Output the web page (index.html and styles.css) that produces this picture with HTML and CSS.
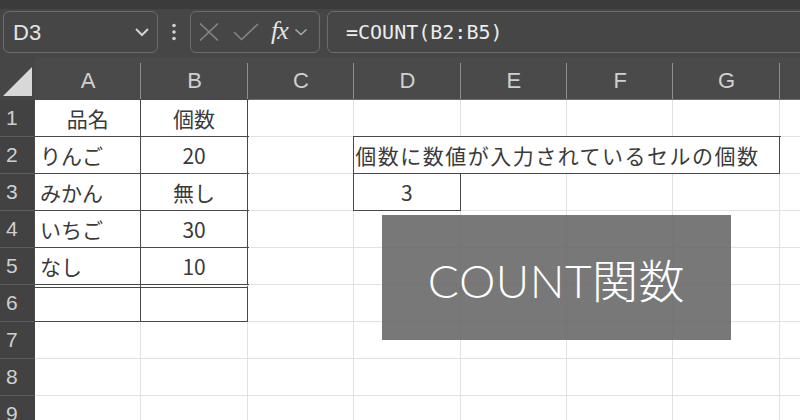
FILE: index.html
```html
<!DOCTYPE html>
<html lang="ja">
<head>
<meta charset="utf-8">
<link rel="stylesheet" href="styles.css">
</head>
<body>
<div class="app">
  <div class="topbar">
    <div class="namebox">
      <span class="ref">D3</span>
      <svg class="chev" width="16" height="10" viewBox="0 0 16 10"><polyline points="2,2 8,8 14,2" fill="none" stroke="#d2d2d2" stroke-width="2"/></svg>
    </div>
    <div class="dots">
      <svg width="6" height="18" viewBox="0 0 6 18"><circle cx="3" cy="2.5" r="1.8" fill="#cfcfcf"/><circle cx="3" cy="9" r="1.8" fill="#cfcfcf"/><circle cx="3" cy="15.5" r="1.8" fill="#cfcfcf"/></svg>
    </div>
    <div class="fxbox">
      <svg class="ico-x" width="20" height="18" viewBox="0 0 20 18"><path d="M1 0.5 L19 17.5 M19 0.5 L1 17.5" stroke="#858585" stroke-width="1.6" fill="none"/></svg>
      <svg class="ico-ok" width="26" height="18" viewBox="0 0 26 18"><polyline points="1,9 8.5,16.5 25,1" stroke="#858585" stroke-width="1.6" fill="none"/></svg>
      <span class="fx">fx</span>
      <svg class="chev2" width="14" height="8" viewBox="0 0 14 8"><polyline points="1.5,1.5 7,6.5 12.5,1.5" fill="none" stroke="#a8a8a8" stroke-width="1.6"/></svg>
    </div>
    <div class="formula">=COUNT(B2:B5)</div>
  </div>

  <div class="sheet">
    <div class="corner"><svg width="30" height="30" viewBox="0 0 30 30"><polygon points="0,29 29,29 29,0" fill="#d8d8d8"/></svg></div>
    <div class="ch">A</div><div class="ch">B</div><div class="ch">C</div><div class="ch">D</div><div class="ch">E</div><div class="ch">F</div><div class="ch">G</div><div class="ch"></div>

    <div class="rh">1</div>
    <div class="c dk ctr">品名</div><div class="c dk ctr">個数</div><div class="c"></div><div class="c"></div><div class="c"></div><div class="c"></div><div class="c"></div><div class="c"></div>

    <div class="rh">2</div>
    <div class="c dk">りんご</div><div class="c dk ctr">20</div><div class="c"></div><div class="c dk merge">個数に数値が入力されているセルの個数</div><div class="c"></div>

    <div class="rh">3</div>
    <div class="c dk">みかん</div><div class="c dk ctr">無し</div><div class="c"></div><div class="c dk ctr">3</div><div class="c"></div><div class="c"></div><div class="c"></div><div class="c"></div>

    <div class="rh">4</div>
    <div class="c dk">いちご</div><div class="c dk ctr">30</div><div class="c"></div><div class="c"></div><div class="c"></div><div class="c"></div><div class="c"></div><div class="c"></div>

    <div class="rh">5</div>
    <div class="c dk">なし</div><div class="c dk ctr">10</div><div class="c"></div><div class="c"></div><div class="c"></div><div class="c"></div><div class="c"></div><div class="c"></div>

    <div class="rh">6</div>
    <div class="c dk dtop"></div><div class="c dk dtop"></div><div class="c"></div><div class="c"></div><div class="c"></div><div class="c"></div><div class="c"></div><div class="c"></div>

    <div class="rh">7</div>
    <div class="c"></div><div class="c"></div><div class="c"></div><div class="c"></div><div class="c"></div><div class="c"></div><div class="c"></div><div class="c"></div>

    <div class="rh">8</div>
    <div class="c"></div><div class="c"></div><div class="c"></div><div class="c"></div><div class="c"></div><div class="c"></div><div class="c"></div><div class="c"></div>

    <div class="rh">9</div>
    <div class="c"></div><div class="c"></div><div class="c"></div><div class="c"></div><div class="c"></div><div class="c"></div><div class="c"></div><div class="c"></div>
  </div>

  <div class="banner">COUNT関数</div>
</div>
</body>
</html>
```
FILE: styles.css
```css
html, body {
  margin: 0;
  padding: 0;
  background: #ffffff;
}
body {
  width: 800px;
  height: 420px;
  overflow: hidden;
  font-family: "Noto Sans CJK JP", "Noto Sans", sans-serif;
}
.app {
  position: relative;
  width: 800px;
  height: 420px;
  overflow: hidden;
}

/* ---------- formula bar ---------- */
.topbar {
  height: 57px;
  box-sizing: border-box;
  background: #464646;
  border-top: 9px solid #3b3b3b;
  padding-top: 2px;
  padding-left: 3px;
  display: flex;
  align-items: flex-start;
}
.namebox {
  width: 155px;
  height: 42px;
  box-sizing: border-box;
  border: 1px solid #6b6b6b;
  border-radius: 6px;
  display: flex;
  align-items: center;
  justify-content: space-between;
  padding: 0 7px 0 9px;
  color: #e4e4e4;
  font-family: "Liberation Sans", "Noto Sans", sans-serif;
  font-size: 22px;
}
.namebox .ref { margin-top: 2px; }
.dots {
  width: 32px;
  height: 42px;
  display: flex;
  align-items: center;
  justify-content: center;
}
.fxbox {
  width: 130px;
  height: 42px;
  box-sizing: border-box;
  border: 1px solid #6b6b6b;
  border-radius: 6px;
  display: flex;
  align-items: center;
  padding-left: 8px;
}
.ico-x { margin-right: 14px; }
.ico-ok { margin-right: 12px; }
.fx {
  font-family: "Liberation Serif", "DejaVu Serif", serif;
  font-style: italic;
  font-size: 26px;
  color: #e4e4e4;
  margin-right: 6px;
  margin-top: -3px;
  letter-spacing: -1px;
}
.formula {
  flex: 1;
  margin-left: 7px;
  margin-right: -20px;
  height: 42px;
  box-sizing: border-box;
  border: 1px solid #6b6b6b;
  border-radius: 6px;
  padding-left: 18px;
  display: flex;
  align-items: center;
  color: #ececec;
  font-family: "DejaVu Sans Mono", "Liberation Mono", monospace;
  font-size: 20px;
}

/* ---------- sheet grid ---------- */
.sheet {
  display: grid;
  grid-template-columns: 35px repeat(8, 106.4px);
  grid-template-rows: 43px repeat(9, 37px);
  font-size: 21px;
  color: #3a3a3a;
}
.corner {
  background: #464646;
  display: flex;
  align-items: flex-end;
  padding: 0 0 3px 3px;
  box-sizing: border-box;
}
.ch {
  background-color: #4a4a4a;
  background-image: linear-gradient(#8e8e8e, #8e8e8e);
  background-repeat: no-repeat;
  background-position: right bottom;
  background-size: 1px 36px;
  border-bottom: 1px solid #6e6e6e;
  box-sizing: border-box;
  color: #d0d0d0;
  font-family: "Liberation Sans", "Noto Sans", sans-serif;
  font-size: 22px;
  display: flex;
  align-items: center;
  justify-content: center;
  padding-top: 6px;
}
.rh {
  background: #424242;
  border-bottom: 1px solid #5e5e5e;
  box-sizing: border-box;
  color: #cfcfcf;
  font-family: "Liberation Sans", "Noto Sans", sans-serif;
  font-size: 21px;
  display: flex;
  align-items: center;
  padding-left: 6px;
}
.c {
  background: #ffffff;
  border-right: 1px solid #e2e2e2;
  border-bottom: 1px solid #e2e2e2;
  box-sizing: border-box;
  display: flex;
  align-items: center;
  padding-left: 5px;
  white-space: nowrap;
  overflow: visible;
}
.c.ctr {
  justify-content: center;
  padding-left: 0;
}
.c.dk {
  border-right-color: #484848;
  border-bottom-color: #484848;
  box-shadow: 0 0 0 1px #484848;
}
.c.dtop {
  border-top: 2px solid #ffffff;
  box-shadow: 0 0 0 1px #484848, inset 0 1px 0 #484848;
}
.c.merge {
  grid-column: span 4;
  padding-left: 1px;
  letter-spacing: 1.5px;
}

/* ---------- overlay banner ---------- */
.banner {
  position: absolute;
  left: 382px;
  top: 215px;
  width: 349px;
  height: 125px;
  background: rgba(105, 105, 105, 0.9);
  color: #ffffff;
  font-family: "Lato", "Noto Sans CJK JP", sans-serif;
  font-weight: 300;
  font-size: 46px;
  display: flex;
  align-items: center;
  justify-content: center;
  letter-spacing: 0.5px;
}
```
